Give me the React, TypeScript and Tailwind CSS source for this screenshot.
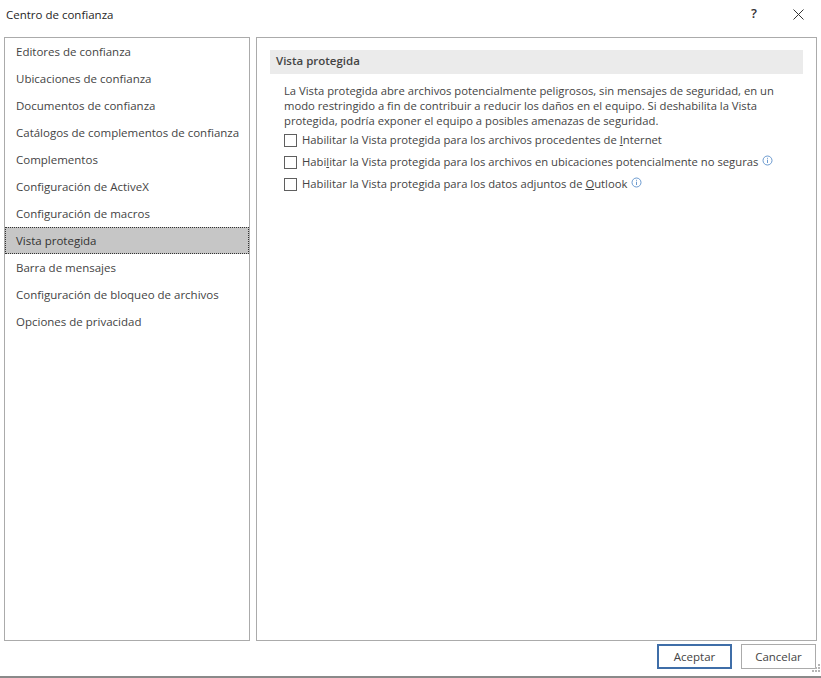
const navItems = [
  'Editores de confianza',
  'Ubicaciones de confianza',
  'Documentos de confianza',
  'Catálogos de complementos de confianza',
  'Complementos',
  'Configuración de ActiveX',
  'Configuración de macros',
  'Vista protegida',
  'Barra de mensajes',
  'Configuración de bloqueo de archivos',
  'Opciones de privacidad',
];

function InfoIcon() {
  return (
    <svg width="11" height="11" viewBox="0 0 11 11" className="ml-[4px] mb-[4px] shrink-0" fill="none">
      <circle cx="5.5" cy="5.5" r="4.5" stroke="#5b8fc9" strokeWidth="0.9" />
      <path d="M5.5 4.7V8M5.5 2.8V3.8" stroke="#5b8fc9" strokeWidth="0.9" />
    </svg>
  );
}

function OptionRow({ children, info }: { children: React.ReactNode; info?: boolean }) {
  return (
    <div className="flex h-[22px] items-center">
      <div className="h-[13px] w-[13px] shrink-0 border border-[#5f5f5f] bg-white" />
      <span className="ml-[5px] whitespace-nowrap">{children}</span>
      {info && <InfoIcon />}
    </div>
  );
}

export default function App() {
  return (
    <div className="relative flex h-[678px] w-[821px] flex-col overflow-hidden border-b-2 border-[#8a8a8a] bg-white font-['Open_Sans','Noto_Sans',sans-serif] text-[11.5px] text-[#444444]">
      {/* Title bar */}
      <div className="flex h-[37px] shrink-0 items-center justify-between pb-[9px] pl-[6px] pr-[17px]">
        <span className="mt-[2px] text-[#262626]">Centro de confianza</span>
        <div className="flex items-center gap-[36px]">
          <span className="text-[13px] font-semibold text-[#333333]">?</span>
          <svg width="11" height="11" viewBox="0 0 11 11" fill="none">
            <path d="M0.5 0.5L10.5 10.5M10.5 0.5L0.5 10.5" stroke="#333333" strokeWidth="1" />
          </svg>
        </div>
      </div>

      {/* Panels */}
      <div className="flex h-[604px] shrink-0 gap-[6px] pl-[4px] pr-[4px]">
        <div className="flex w-[246px] shrink-0 flex-col border border-[#ababab]">
          {navItems.map((item) => (
            <div
              key={item}
              className={
                item === 'Vista protegida'
                  ? 'flex h-[27px] items-center whitespace-nowrap border border-dotted border-[#333333] bg-[#c6c6c6] pl-[10px] text-[#333333]'
                  : 'flex h-[27px] items-center whitespace-nowrap pl-[11px]'
              }
            >
              {item}
            </div>
          ))}
        </div>

        <div className="flex-1 border border-[#ababab] pl-[13px] pr-[13px] pt-[12px]">
          <div className="flex h-[24px] items-center bg-[#ebebeb] pb-[3px] pl-[6px] font-semibold">Vista protegida</div>
          <div className="pl-[14px] pr-[20px] pt-[9px] text-[11.25px]">
            <p className="leading-[15px]">
              La Vista protegida abre archivos potencialmente peligrosos, sin mensajes de seguridad, en un modo
              restringido a fin de contribuir a reducir los daños en el equipo. Si deshabilita la Vista protegida,
              podría exponer el equipo a posibles amenazas de seguridad.
            </p>
            <div className="mt-px">
              <OptionRow>
                Habilitar la Vista protegida para los archivos procedentes de <span className="underline">I</span>nternet
              </OptionRow>
              <OptionRow info>
                Habi<span className="underline">l</span>itar la Vista protegida para los archivos en ubicaciones
                potencialmente no seguras
              </OptionRow>
              <OptionRow info>
                Habilitar la Vista protegida para los datos adjuntos de <span className="underline">O</span>utlook
              </OptionRow>
            </div>
          </div>
        </div>
      </div>

      {/* Footer buttons */}
      <div className="flex flex-1 items-start justify-end gap-[9px] pr-[5px] pt-[3px]">
        <button className="h-[25px] w-[75px] border-2 border-[#3f6ea8] bg-white text-[#444444]">Aceptar</button>
        <button className="h-[25px] w-[75px] border border-[#ababab] bg-white text-[#444444]">Cancelar</button>
      </div>

      {/* Resize grip */}
      <svg width="8" height="8" viewBox="0 0 8 8" className="absolute bottom-[4px] right-px" fill="#b5b5b5">
        <rect x="6" y="0" width="2" height="2" />
        <rect x="3" y="3" width="2" height="2" />
        <rect x="6" y="3" width="2" height="2" />
        <rect x="0" y="6" width="2" height="2" />
        <rect x="3" y="6" width="2" height="2" />
        <rect x="6" y="6" width="2" height="2" />
      </svg>
    </div>
  );
}
